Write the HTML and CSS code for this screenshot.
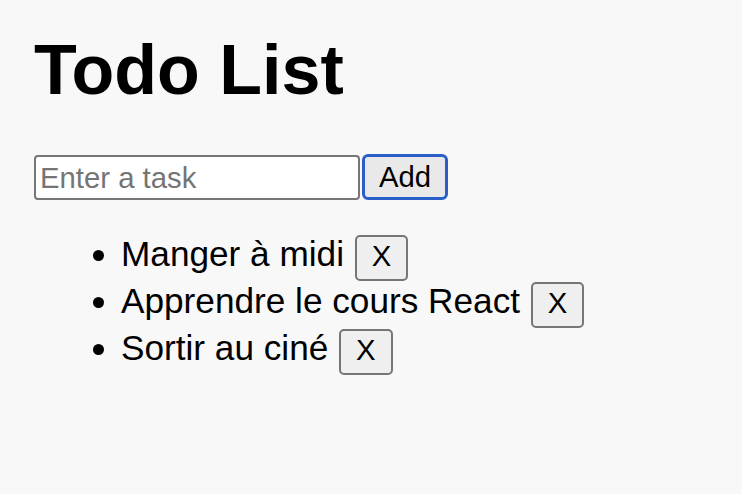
FILE: index.html
```html
<!DOCTYPE html>
<html lang="fr">
<head>
<meta charset="utf-8">
<title>Todo List</title>
<link rel="stylesheet" href="styles.css">
</head>
<body>
<div class="app">
  <h1 class="title">Todo List</h1>
  <div class="form-row">
    <input class="task-input" type="text" placeholder="Enter a task">
    <button class="add-btn">Add</button>
  </div>
  <ul class="todo-list">
    <li class="todo-item">Manger à midi <button class="del-btn">X</button></li>
    <li class="todo-item">Apprendre le cours React <button class="del-btn">X</button></li>
    <li class="todo-item">Sortir au ciné <button class="del-btn">X</button></li>
  </ul>
</div>
</body>
</html>
```

FILE: styles.css
```css
html, body {
  margin: 0;
  padding: 0;
  background: #f8f8f8;
}

body {
  font-family: "Liberation Sans", Arial, sans-serif;
  color: #000;
}

.app {
  padding: 30px 0 0 34px;
}

.title {
  margin: 0 0 44px;
  font-size: 70px;
  line-height: 80px;
  font-weight: bold;
}

.form-row {
  display: flex;
  align-items: flex-start;
  gap: 2px;
}

.task-input {
  box-sizing: border-box;
  width: 326px;
  height: 45px;
  margin: 1px 0 0;
  padding: 0 4px;
  border: 2px solid #767676;
  border-radius: 4px;
  background: #fff;
  font-family: "Liberation Sans", Arial, sans-serif;
  font-size: 29.3px;
  color: #000;
  outline: none;
}

.task-input::placeholder {
  color: #757575;
}

.add-btn {
  box-sizing: border-box;
  width: 86px;
  height: 46px;
  margin: 0;
  padding: 0;
  border: 3px solid #2a5fc7;
  border-radius: 6px;
  background: #e9e9e9;
  font-family: "Liberation Sans", Arial, sans-serif;
  font-size: 29.3px;
  color: #000;
}

.todo-list {
  margin: 34px 0 0;
  padding-left: 87px;
  font-size: 35.2px;
}

.todo-item {
  line-height: normal;
}

.del-btn {
  box-sizing: border-box;
  margin: 0 0 0 1px;
  padding: 0 15px 5px;
  border: 2px solid #767676;
  border-radius: 5px;
  background: #efefef;
  font-family: "Liberation Sans", Arial, sans-serif;
  font-size: 29.3px;
  line-height: 37px;
  color: #000;
  vertical-align: baseline;
}
```
